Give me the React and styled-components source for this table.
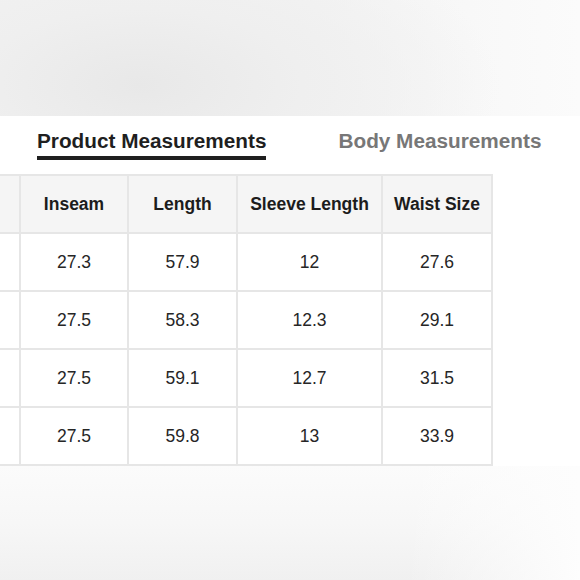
import React, { useState } from 'react';
import styled, { createGlobalStyle } from 'styled-components';

const GlobalStyle = createGlobalStyle`
  html, body {
    margin: 0;
    padding: 0;
    background: #ffffff;
  }
  body {
    font-family: "Liberation Sans", Arial, sans-serif;
  }
`;

const Page = styled.div`
  width: 580px;
  height: 580px;
  display: flex;
  flex-direction: column;
  overflow: hidden;
`;

const TopShade = styled.div`
  height: 116px;
  flex-shrink: 0;
  background:
    radial-gradient(ellipse 360px 170px at 140px 85px, #e8e8e8 0%, #efefef 45%, rgba(245,245,245,0) 100%),
    linear-gradient(90deg, #f3f3f3 0%, #f4f4f4 55%, #fbfbfb 100%);
`;

const Panel = styled.section`
  background: #ffffff;
  padding-top: 13px;
`;

const Tabs = styled.div`
  display: flex;
  gap: 72px;
  padding-left: 37px;
`;

const Tab = styled.button`
  appearance: none;
  background: none;
  border: none;
  border-bottom: 4px solid ${p => (p.$active ? '#1f1f1f' : 'transparent')};
  padding: 0 0 3px;
  margin: 0;
  font-family: inherit;
  font-size: 20.75px;
  line-height: 24px;
  font-weight: 700;
  color: ${p => (p.$active ? '#1f1f1f' : '#777777')};
  cursor: pointer;
`;

const TableClip = styled.div`
  margin-top: 14px;
  margin-left: -89px;
`;

const Table = styled.table`
  border-collapse: collapse;
  table-layout: fixed;
  width: 580px;
`;

const HeadCell = styled.th`
  height: 58px;
  padding: 0;
  box-sizing: border-box;
  border: 2px solid #e6e6e6;
  background: #f5f5f5;
  font-size: 17.5px;
  font-weight: 700;
  color: #1c1c1c;
  text-align: center;
  vertical-align: middle;
`;

const Cell = styled.td`
  height: 58px;
  padding: 0;
  box-sizing: border-box;
  border: 2px solid #e6e6e6;
  background: #ffffff;
  font-size: 17.5px;
  color: #262626;
  text-align: center;
  vertical-align: middle;
`;

const BottomShade = styled.div`
  flex: 1;
  background:
    linear-gradient(90deg, rgba(255,255,255,0) 70%, #fdfdfd 100%),
    linear-gradient(180deg, #fbfbfb 0%, #f7f7f7 50%, #f0f0f0 100%);
`;

// the first column lies mostly outside the frame; nothing of its text shows
const columns = [
  { key: 'size', label: '', width: 108 },
  { key: 'inseam', label: 'Inseam', width: 108 },
  { key: 'length', label: 'Length', width: 109 },
  { key: 'sleeve', label: 'Sleeve Length', width: 145 },
  { key: 'waist', label: 'Waist Size', width: 110 },
];

const rows = [
  { size: '', inseam: '27.3', length: '57.9', sleeve: '12', waist: '27.6' },
  { size: '', inseam: '27.5', length: '58.3', sleeve: '12.3', waist: '29.1' },
  { size: '', inseam: '27.5', length: '59.1', sleeve: '12.7', waist: '31.5' },
  { size: '', inseam: '27.5', length: '59.8', sleeve: '13', waist: '33.9' },
];

export default function App() {
  const [tab, setTab] = useState('product');

  return (
    <Page>
      <GlobalStyle />
      <TopShade />
      <Panel>
        <Tabs>
          <Tab $active={tab === 'product'} onClick={() => setTab('product')}>
            Product Measurements
          </Tab>
          <Tab $active={tab === 'body'} onClick={() => setTab('body')}>
            Body Measurements
          </Tab>
        </Tabs>
        <TableClip>
          <Table>
            <colgroup>
              {columns.map(c => (
                <col key={c.key} style={{ width: c.width }} />
              ))}
            </colgroup>
            <thead>
              <tr>
                {columns.map(c => (
                  <HeadCell key={c.key}>{c.label}</HeadCell>
                ))}
              </tr>
            </thead>
            <tbody>
              {rows.map((r, i) => (
                <tr key={i}>
                  {columns.map(c => (
                    <Cell key={c.key}>{r[c.key]}</Cell>
                  ))}
                </tr>
              ))}
            </tbody>
          </Table>
        </TableClip>
      </Panel>
      <BottomShade />
    </Page>
  );
}
